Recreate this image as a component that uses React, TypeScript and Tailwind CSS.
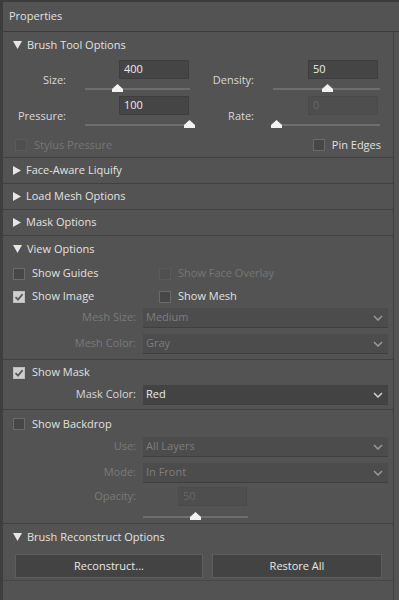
import React from "react";

const font = { fontFamily: "'Open Sans', Lato, sans-serif" };

function Tri({ open }: { open: boolean }) {
  return open ? (
    <svg width="9" height="8" viewBox="0 0 9 8" className="shrink-0">
      <polygon points="0,0 9,0 4.5,8" fill="#e6e6e6" />
    </svg>
  ) : (
    <svg width="8" height="9" viewBox="0 0 8 9" className="shrink-0">
      <polygon points="0,0 8,4.5 0,9" fill="#e6e6e6" />
    </svg>
  );
}

function SectionHead({ title, open, h = "h-[25px]" }: { title: string; open: boolean; h?: string }) {
  return (
    <div className={`flex items-center gap-[5px] pl-[10px] ${h} text-[11px] text-[#e2e2e2]`}>
      <Tri open={open} />
      <span>{title}</span>
    </div>
  );
}

function Thumb() {
  return (
    <svg width="11" height="8" viewBox="0 0 11 8">
      <polygon points="5.5,0 11,5 11,8 0,8 0,5" fill="#f2f2f2" />
    </svg>
  );
}

function Slider({ pos, w }: { pos: number; w: string }) {
  return (
    <div className={`relative h-[10px] ${w}`}>
      <div className="absolute left-0 right-0 top-[5px] h-[2px] bg-[#6e6e6e]" />
      <div className="absolute top-[1px]" style={{ left: pos - 5 }}>
        <Thumb />
      </div>
    </div>
  );
}

function Check({ checked, disabled }: { checked?: boolean; disabled?: boolean }) {
  return (
    <div
      className={`flex h-[12px] w-[12px] shrink-0 items-center justify-center border ${
        checked
          ? "border-[#bdbdbd] bg-[#cfcfcf]"
          : disabled
          ? "border-[#5a5a5a] bg-[#4f4f4f]"
          : "border-[#6a6a6a] bg-[#474747]"
      }`}
    >
      {checked && (
        <svg width="10" height="10" viewBox="0 0 10 10">
          <path d="M1.5 5.2 L4 7.6 L8.6 2.2" stroke="#5a5a5a" strokeWidth="1.8" fill="none" />
        </svg>
      )}
    </div>
  );
}

function CheckRow({
  label,
  checked,
  disabled,
}: {
  label: string;
  checked?: boolean;
  disabled?: boolean;
}) {
  return (
    <div className={`flex items-center gap-[7px] text-[11px] ${disabled ? "text-[#767676]" : "text-[#e0e0e0]"}`}>
      <Check checked={checked} disabled={disabled} />
      <span>{label}</span>
    </div>
  );
}

function Field({
  label,
  value,
  labelW,
  sliderW,
  inputMl,
  pos,
  disabled,
}: {
  label: string;
  value: string;
  labelW: string;
  sliderW: string;
  inputMl: string;
  pos: number;
  disabled?: boolean;
}) {
  return (
    <div className="flex items-start">
      <div className={`${labelW} pt-[12px] text-right text-[11px] text-[#d8d8d8]`}>{label}</div>
      <div className="ml-[19px] flex flex-col">
        <div
          className={`${inputMl} flex h-[19px] w-[70px] items-center border pl-[4px] text-[11px] ${
            disabled
              ? "border-[#4a4a4a] bg-[#4e4e4e] text-[#686868]"
              : "border-[#3e3e3e] bg-[#454545] text-[#ececec]"
          }`}
        >
          {value}
        </div>
        <div className="mt-[4px]">
          <Slider pos={pos} w={sliderW} />
        </div>
      </div>
    </div>
  );
}

function Chevron({ color }: { color: string }) {
  return (
    <svg width="10" height="6" viewBox="0 0 10 6">
      <path d="M1 1 L5 5 L9 1" stroke={color} strokeWidth="1.5" fill="none" />
    </svg>
  );
}

function SelectRow({ label, value, disabled }: { label: string; value: string; disabled?: boolean }) {
  return (
    <div className="flex items-center">
      <div className={`w-[133px] text-right text-[11px] ${disabled ? "text-[#7a7a7a]" : "text-[#d8d8d8]"}`}>
        {label}
      </div>
      <div
        className={`ml-[7px] flex h-[19px] w-[245px] items-center justify-between pl-[3px] pr-[5px] text-[11px] shadow-[0_1px_0_#3f3f3f] ${
          disabled ? "bg-[#4c4c4c] text-[#7e7e7e]" : "bg-[#434343] text-[#ededed]"
        }`}
      >
        <span>{value}</span>
        <Chevron color={disabled ? "#9a9a9a" : "#d0d0d0"} />
      </div>
    </div>
  );
}

export default function App() {
  return (
    <div className="h-[600px] w-[399px] overflow-hidden bg-[#535353]" style={font}>
      <div className="flex h-[32px] items-center border-t-2 border-b border-[#3c3c3c] border-l-[3px] pl-[6px] text-[11px] text-[#e0e0e0]">
        Properties
      </div>
      <div className="h-[568px] w-[394px] border-l-[3px] border-r border-[#3e3e3e]">
        <div className="border-b border-[#404040]">
          <SectionHead title="Brush Tool Options" open h="h-[26px]" />
          <div className="mt-[2px] flex">
            <div className="w-[197px]">
              <Field label="Size:" value="400" labelW="w-[63px]" sliderW="w-[105px]" inputMl="ml-[34px]" pos={32} />
            </div>
            <Field label="Density:" value="50" labelW="w-[54px]" sliderW="w-[107px]" inputMl="ml-[35px]" pos={54} />
          </div>
          <div className="mt-[3px] flex">
            <div className="w-[197px]">
              <Field label="Pressure:" value="100" labelW="w-[63px]" sliderW="w-[105px]" inputMl="ml-[34px]" pos={104} />
            </div>
            <Field label="Rate:" value="0" labelW="w-[54px]" sliderW="w-[107px]" inputMl="ml-[35px]" pos={3} disabled />
          </div>
          <div className="flex h-[28px] items-center justify-between pl-[12px] pr-[12px] pt-[4px]">
            <CheckRow label="Stylus Pressure" disabled />
            <CheckRow label="Pin Edges" />
          </div>
        </div>
        <div className="border-b border-[#404040]">
          <SectionHead title="Face-Aware Liquify" open={false} />
        </div>
        <div className="border-b border-[#404040]">
          <SectionHead title="Load Mesh Options" open={false} />
        </div>
        <div className="border-b border-[#404040]">
          <SectionHead title="Mask Options" open={false} />
        </div>
        <div className="border-b border-[#404040]">
          <SectionHead title="View Options" open h="h-[26px]" />
          <div className="flex flex-col pl-[10px]">
            <div className="flex h-[23px] items-center">
              <div className="w-[146px]">
                <CheckRow label="Show Guides" />
              </div>
              <CheckRow label="Show Face Overlay" disabled />
            </div>
            <div className="flex h-[23px] items-center">
              <div className="w-[146px]">
                <CheckRow label="Show Image" checked />
              </div>
              <CheckRow label="Show Mesh" />
            </div>
          </div>
          <div className="flex flex-col gap-[7px] pb-[6px]">
            <SelectRow label="Mesh Size:" value="Medium" disabled />
            <SelectRow label="Mesh Color:" value="Gray" disabled />
          </div>
          <div className="border-t border-[#404040] pb-[5px]">
            <div className="flex h-[25px] items-center pl-[10px]">
              <CheckRow label="Show Mask" checked />
            </div>
            <SelectRow label="Mask Color:" value="Red" />
          </div>
          <div className="border-t border-[#404040] pb-[2px] pt-[1px]">
            <div className="flex h-[26px] items-center pl-[10px]">
              <CheckRow label="Show Backdrop" />
            </div>
            <div className="flex flex-col gap-[7px]">
              <SelectRow label="Use:" value="All Layers" disabled />
              <SelectRow label="Mode:" value="In Front" disabled />
            </div>
            <div className="mt-[5px] flex items-center">
              <div className="w-[133px] text-right text-[11px] text-[#7a7a7a]">Opacity:</div>
              <div className="ml-[42px] flex h-[19px] w-[69px] items-center border border-[#4a4a4a] bg-[#4e4e4e] pl-[4px] text-[11px] text-[#686868]">
                50
              </div>
            </div>
            <div className="ml-[140px] mt-[5px]">
              <Slider pos={52} w="w-[105px]" />
            </div>
          </div>
        </div>
        <div className="border-b border-[#474747]">
          <SectionHead title="Brush Reconstruct Options" open h="h-[26px]" />
          <div className="flex gap-[9px] pb-[2px] pl-[12px] pt-[4px]">
            <button className="h-[24px] w-[188px] border border-[#5e5e5e] bg-[#434343] text-[11px] text-[#e8e8e8]">
              Reconstruct...
            </button>
            <button className="h-[24px] w-[170px] border border-[#5e5e5e] bg-[#434343] text-[11px] text-[#e8e8e8]">
              Restore All
            </button>
          </div>
        </div>
      </div>
    </div>
  );
}
